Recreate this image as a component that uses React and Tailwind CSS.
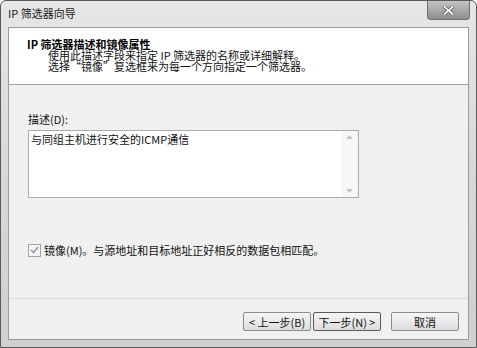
import React from 'react';

const font = { fontFamily: '"Noto Sans CJK SC", "Liberation Sans", sans-serif' };

function App() {
  return (
    <div className="w-[477px] h-[348px] bg-white overflow-hidden" style={font}>
      {/* Window frame */}
      <div className="w-[477px] h-[348px] flex flex-col rounded-t-[6px] border border-[#5a5a5a] bg-gradient-to-b from-[#e6e6e6] via-[#d8d8d8] to-[#d0d0d0]">
        {/* Title bar */}
        <div className="h-[26px] flex items-start justify-between pl-[7px] pr-[6px]">
          <div className="pt-[6px] text-[11px] leading-[13px] text-[#1a1a1a]">IP 筛选器向导</div>
          <div className="w-[43px] h-[19px] flex items-center justify-center rounded-b-[4px] border border-t-0 border-[#6e6e6e] bg-gradient-to-b from-[#c4c4c4] to-[#8e8e8e]">
            <svg width="11" height="9" viewBox="0 0 11 9">
              <path d="M1.5 1 L9.5 8 M9.5 1 L1.5 8" stroke="#4a4a4a" strokeWidth="3.2" strokeLinecap="square" />
              <path d="M1.5 1 L9.5 8 M9.5 1 L1.5 8" stroke="#ffffff" strokeWidth="1.8" strokeLinecap="square" />
            </svg>
          </div>
        </div>

        {/* Client area */}
        <div className="mx-[7px] mb-[7px] flex-1 flex flex-col border border-[#9a9a9a] bg-[#f0f0f0]">
          {/* Header */}
          <div className="h-[57px] bg-white border-b border-[#a0a0a0] pl-[18px] pt-[10px]">
            <div className="text-[11px] leading-[12px] font-bold text-black">IP 筛选器描述和镜像属性</div>
            <div className="pl-[21px] text-[11px] leading-[11px] text-[#111]">
              使用此描述字段来指定 IP 筛选器的名称或详细解释。<br />
              选择“镜像”复选框来为每一个方向指定一个筛选器。
            </div>
          </div>

          {/* Body */}
          <div className="flex-1 flex flex-col pl-[19px]">
            <div className="mt-[27px] text-[11px] leading-[14px] text-[#111]">描述(D):</div>
            <div className="mt-[4px] w-[331px] h-[68px] flex border border-[#acacac] bg-white">
              <div className="flex-1 px-[2px] pt-[1px] text-[11px] leading-[14px] text-[#111]">与同组主机进行安全的ICMP通信</div>
              <div className="w-[17px] flex flex-col justify-between items-center py-[4px] bg-[#f7f7f7]">
                <svg width="7" height="4" viewBox="0 0 7 4"><path d="M0 4 L3.5 0 L7 4 Z" fill="#c4c4c4" /></svg>
                <svg width="7" height="4" viewBox="0 0 7 4"><path d="M0 0 L3.5 4 L7 0 Z" fill="#c4c4c4" /></svg>
              </div>
            </div>

            <div className="mt-[45px] flex items-center gap-[3px]">
              <div className="w-[13px] h-[13px] border border-[#a4a4a4] bg-[#f4f4f4] flex items-center justify-center">
                <svg width="9" height="8" viewBox="0 0 9 8"><path d="M1 4 L3.5 6.5 L8 1" stroke="#9a9a9a" strokeWidth="1.6" fill="none" /></svg>
              </div>
              <div className="text-[11px] leading-[14px] text-[#111]">镜像(M)。与源地址和目标地址正好相反的数据包相匹配。</div>
            </div>
          </div>

          {/* Footer */}
          <div className="h-[41px] border-t border-[#dcdcdc] flex items-start justify-end pt-[13px] pr-[9px]">
            <button className="w-[68px] h-[19px] border border-[#8a8a8a] rounded-[2px] bg-gradient-to-b from-[#f6f6f6] to-[#dcdcdc] text-[11px] leading-[16px] text-[#111]">&lt; 上一步(B)</button>
            <button className="ml-[2px] w-[68px] h-[19px] border border-[#5a5a5a] rounded-[2px] bg-gradient-to-b from-[#f6f6f6] to-[#dcdcdc] text-[11px] leading-[16px] text-[#111]">下一步(N) &gt;</button>
            <button className="ml-[10px] w-[68px] h-[19px] border border-[#8a8a8a] rounded-[2px] bg-gradient-to-b from-[#f6f6f6] to-[#dcdcdc] text-[11px] leading-[16px] text-[#111]">取消</button>
          </div>
        </div>
      </div>
    </div>
  );
}

export default App;
